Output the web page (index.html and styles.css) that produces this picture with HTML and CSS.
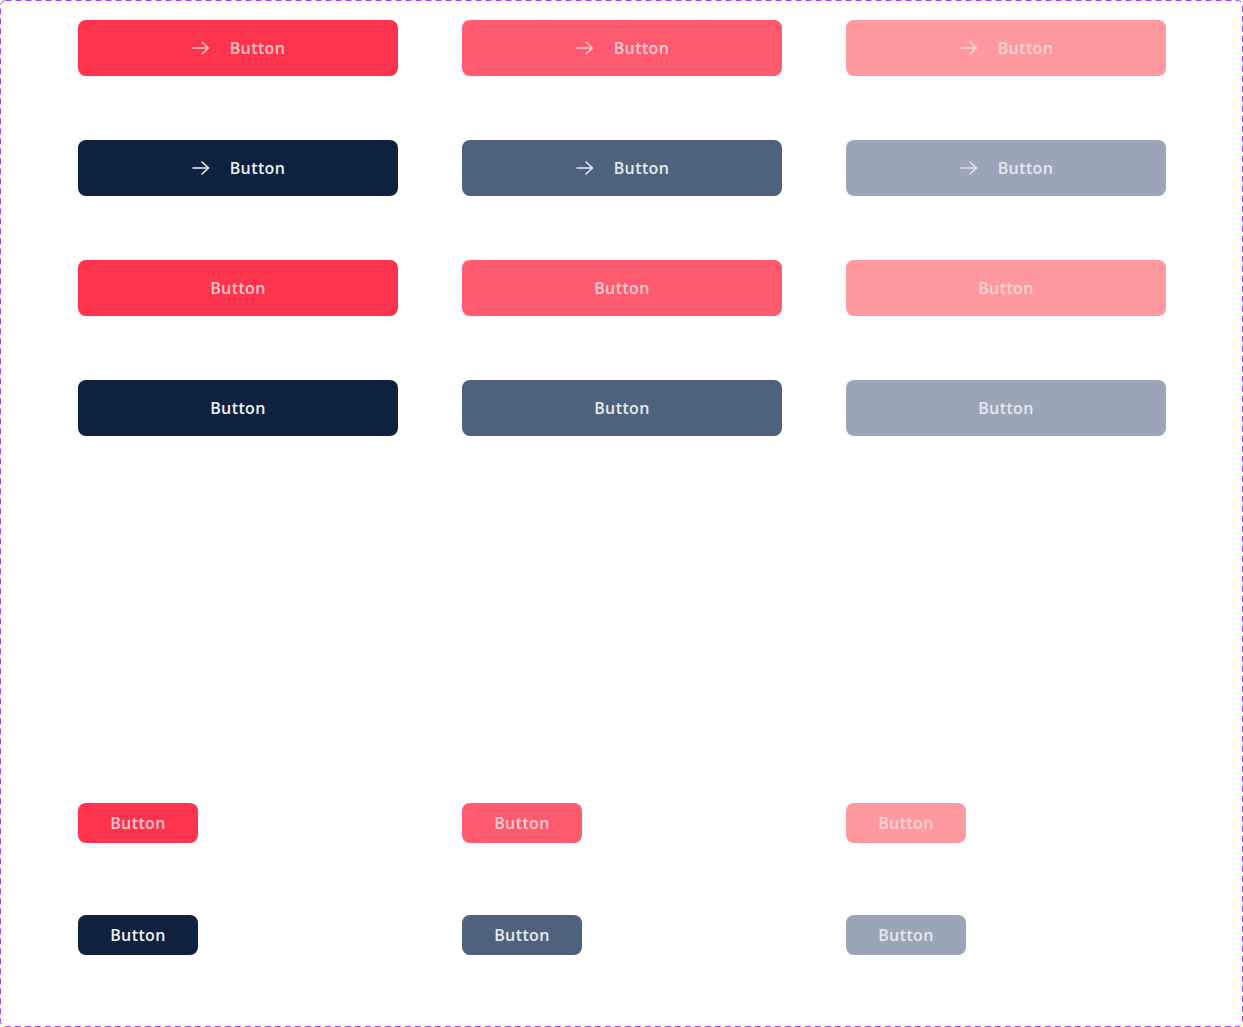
FILE: index.html
```html
<!DOCTYPE html>
<html>
<head>
<meta charset="utf-8">
<link rel="stylesheet" href="styles.css">
</head>
<body>
<div class="frame">
  <div class="grid large">
    <button class="btn red-1"><svg class="ico" viewBox="0 0 20 20"><path d="M2 10h15.5M11 4l6.5 6-6.5 6"/></svg><span>Button</span></button>
    <button class="btn red-2"><svg class="ico" viewBox="0 0 20 20"><path d="M2 10h15.5M11 4l6.5 6-6.5 6"/></svg><span>Button</span></button>
    <button class="btn red-3"><svg class="ico" viewBox="0 0 20 20"><path d="M2 10h15.5M11 4l6.5 6-6.5 6"/></svg><span>Button</span></button>
    <button class="btn navy-1"><svg class="ico" viewBox="0 0 20 20"><path d="M2 10h15.5M11 4l6.5 6-6.5 6"/></svg><span>Button</span></button>
    <button class="btn navy-2"><svg class="ico" viewBox="0 0 20 20"><path d="M2 10h15.5M11 4l6.5 6-6.5 6"/></svg><span>Button</span></button>
    <button class="btn navy-3"><svg class="ico" viewBox="0 0 20 20"><path d="M2 10h15.5M11 4l6.5 6-6.5 6"/></svg><span>Button</span></button>
    <button class="btn red-1"><span>Button</span></button>
    <button class="btn red-2"><span>Button</span></button>
    <button class="btn red-3"><span>Button</span></button>
    <button class="btn navy-1"><span>Button</span></button>
    <button class="btn navy-2"><span>Button</span></button>
    <button class="btn navy-3"><span>Button</span></button>
  </div>
  <div class="grid small">
    <div class="cell"><button class="btn sm red-1"><span>Button</span></button></div>
    <div class="cell"><button class="btn sm red-2"><span>Button</span></button></div>
    <div class="cell"><button class="btn sm red-3"><span>Button</span></button></div>
    <div class="cell"><button class="btn sm navy-1"><span>Button</span></button></div>
    <div class="cell"><button class="btn sm navy-2"><span>Button</span></button></div>
    <div class="cell"><button class="btn sm navy-3"><span>Button</span></button></div>
  </div>
</div>
</body>
</html>
```
FILE: styles.css
```css
html, body {
  margin: 0;
  padding: 0;
  background: #ffffff;
}
.frame {
  box-sizing: border-box;
  width: 1243px;
  height: 1027px;
  padding: 20px 0 0 78px;
  font-family: "Open Sans", sans-serif;
  background-image: url("data:image/svg+xml,%3Csvg xmlns='http://www.w3.org/2000/svg' width='1243' height='1027'%3E%3Crect x='0.5' y='0.5' width='1242' height='1026' rx='5' ry='5' fill='none' stroke='%239747ff' stroke-width='1' stroke-dasharray='6 4'/%3E%3C/svg%3E");
  background-repeat: no-repeat;
}
.grid {
  display: grid;
  grid-template-columns: repeat(3, 320px);
  column-gap: 64px;
}
.large {
  row-gap: 64px;
}
.small {
  margin-top: 367px;
  row-gap: 72px;
}
.btn {
  box-sizing: border-box;
  height: 56px;
  width: 320px;
  border: 0;
  border-radius: 8px;
  padding: 0;
  margin: 0;
  display: flex;
  align-items: center;
  justify-content: center;
  gap: 19px;
  font-family: "Open Sans", sans-serif;
  font-weight: 600;
  font-size: 16px;
  letter-spacing: 0.4px;
  cursor: pointer;
}
.btn.sm {
  width: 120px;
  height: 40px;
}
.ico {
  width: 20px;
  height: 20px;
  fill: none;
  stroke: currentColor;
  stroke-width: 1.6;
  stroke-linecap: round;
  stroke-linejoin: round;
}
.red-1 { background: #fd344b; color: #ffc5cc; }
.red-2 { background: #ff5a6e; color: #ffccd2; }
.red-3 { background: #ff99a0; color: #ffd3d6; }
.navy-1 { background: #0e2240; color: #eef1f6; }
.navy-2 { background: #4f627d; color: #e6ebf2; }
.navy-3 { background: #9aa6b8; color: #e3e7ee; }
```
